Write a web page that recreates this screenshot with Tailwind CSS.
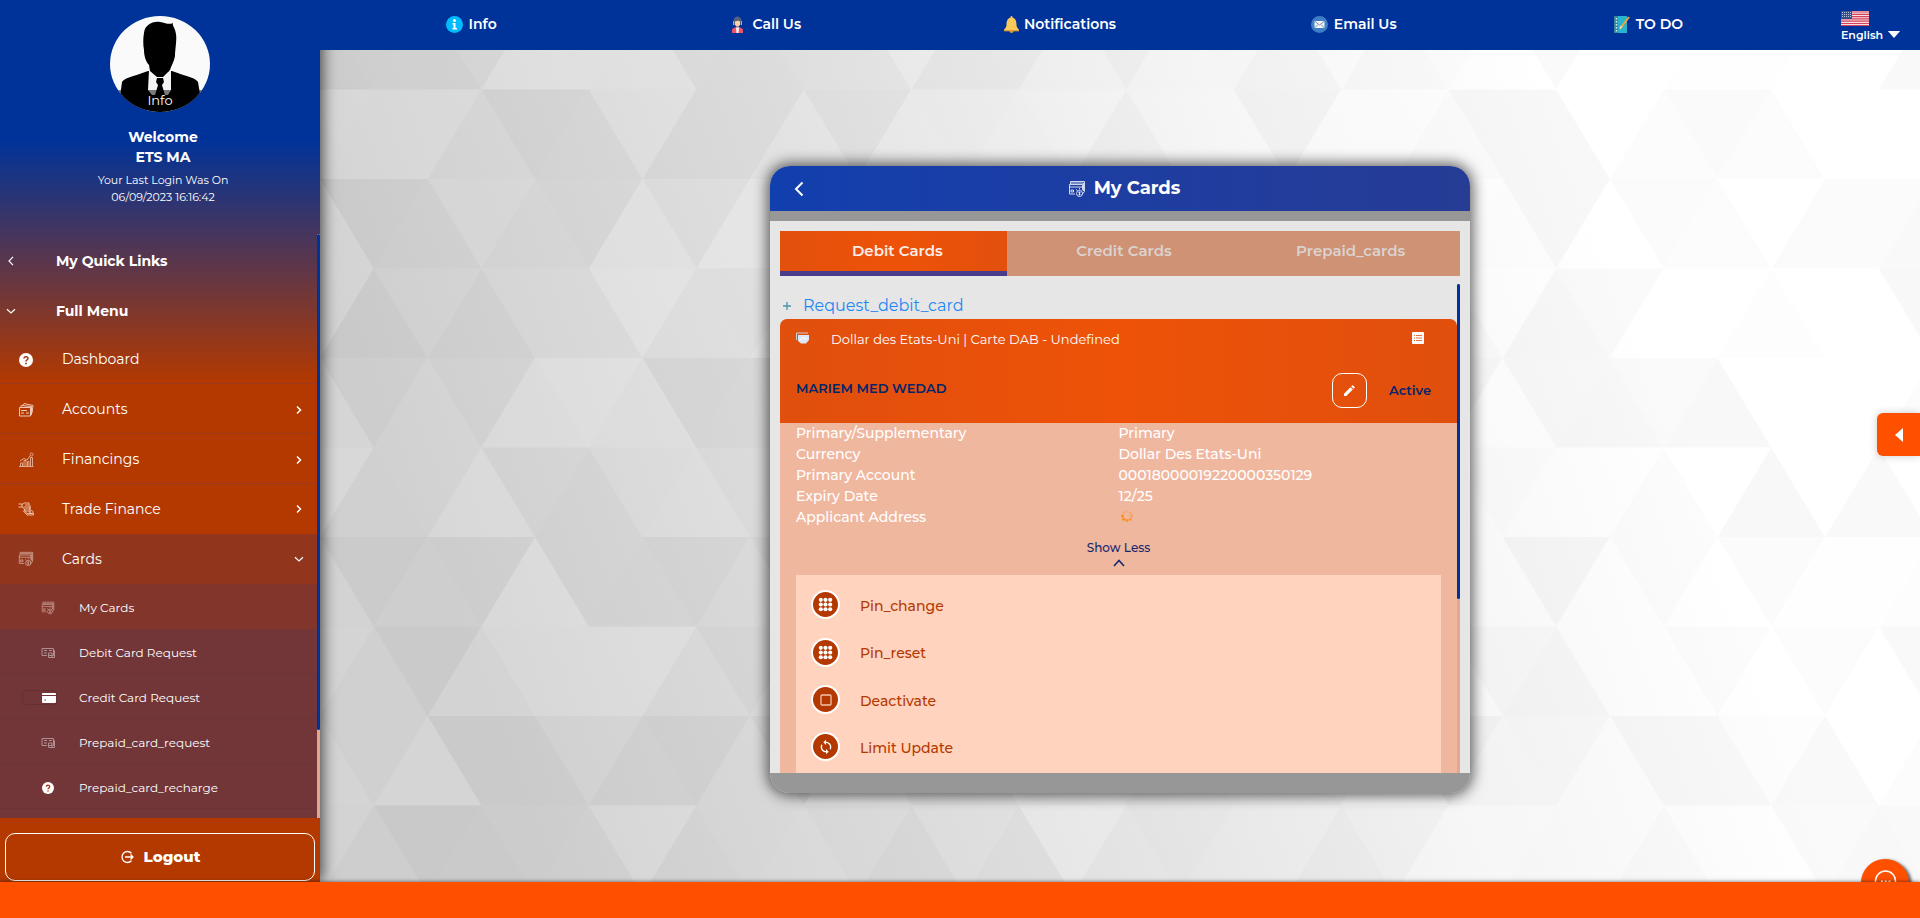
<!DOCTYPE html>
<html lang="en">
<head>
<meta charset="utf-8">
<meta name="viewport" content="width=device-width, initial-scale=1">
<title>My Cards</title>
<script src="https://cdn.jsdelivr.net/npm/@tailwindcss/browser@4"></script>
</head>
<body class="flex h-screen flex-col overflow-hidden bg-white font-['Montserrat','Inter',sans-serif] text-white">

<!-- Shared icons -->
<svg class="hidden" aria-hidden="true">
  <symbol id="i-right" viewBox="0 0 10 10"><path d="M3 1.500L6.500 5L3 8.500" fill="none" stroke="currentColor" stroke-width="1.500"/></symbol>
  <symbol id="i-left" viewBox="0 0 10 10"><path d="M7 .8L3 5L7 9.200" fill="none" stroke="currentColor" stroke-width="1.200"/></symbol>
  <symbol id="i-down" viewBox="0 0 10 10"><path d="M1 3.200L5 7L9 3.200" fill="none" stroke="currentColor" stroke-width="1.200"/></symbol>
  <symbol id="i-help" viewBox="0 0 14 14"><circle cx="7" cy="7" r="7" fill="currentColor"/><path d="M5 5.600C5 3.200 9 3.200 9 5.500C9 7 7 6.900 7 8.400" fill="none" stroke="#a33a14" stroke-width="1.500"/><circle cx="7" cy="10.500" r=".9" fill="#a33a14"/></symbol>
  <symbol id="i-cards" viewBox="0 0 18 18"><g fill="none" stroke="currentColor" stroke-width=".8"><path d="M2.500 4V1.500H16.500V11.500L14 14.500"/><path d="M1.500 14V4.500H14.500V9M3 3H15.500V11"/><path d="M1.500 7H14.500M1.500 14H7M3 10H5.500V12H3Z"/><circle cx="11.500" cy="13.500" r="3"/><path d="M11.500 11.500V15.500M10.500 12.500H12.500M10.500 14.500H12.500M8 9.500L9.500 10.500M11.500 8V9.500M15 9L14 10.500"/></g></symbol>
  <symbol id="i-cardreq" viewBox="0 0 14 12"><g fill="none" stroke="currentColor"><path d="M1 1.500H12.500V8.500H8M1 1.500V8.500H6"/><path d="M3 3.500H6M8 3.500H11M3 6H6M7.500 6H11V10.500H7.500ZM12.500 3.500H13.500V10.500H11"/></g></symbol>
  <symbol id="i-keypad" viewBox="0 0 16 16"><g fill="currentColor"><circle cx="3" cy="3" r="2.200"/><circle cx="8" cy="3" r="2.200"/><circle cx="13" cy="3" r="2.200"/><circle cx="3" cy="8" r="2.200"/><circle cx="8" cy="8" r="2.200"/><circle cx="13" cy="8" r="2.200"/><circle cx="3" cy="13" r="2.200"/><circle cx="8" cy="13" r="2.200"/><circle cx="13" cy="13" r="2.200"/></g></symbol>
</svg>

<div class="flex min-h-0 flex-1">

  <aside class="relative z-10 flex w-80 shrink-0 flex-col bg-[linear-gradient(#003399_140px,#b33900_383px)] shadow-[2px_0_14px_rgba(0,0,0,0.7)]">
    <div class="flex h-[234px] shrink-0 flex-col items-center pt-4">
      <svg class="h-24 w-[100px]" viewBox="0 0 100 96" role="img" aria-label="Profile picture">
        <defs><clipPath id="av"><ellipse cx="50" cy="48" rx="50" ry="48"/></clipPath></defs>
        <g clip-path="url(#av)">
          <rect width="100" height="96" fill="#fafafa"/>
          <path d="M8 96L12 66C14 62 22 61 38 55L62 55C78 61 86 62 88 66L93 96Z" fill="#000"/>
          <path d="M39 54L38 74L42 79H58L61 74L61 54L50 60Z" fill="#f4f4f4"/>
          <path d="M47 62H53L54 66L52 69L55 79H45L48 69L46 66Z" fill="#000"/>
          <path d="M34 17C35 9 42 5 50 6C56 7 59 9 63 7C62 10 65 11 66 18C67 24 65 34 65 40C64 46 61 50 60 54L53 61H47L40 55L39 49C36 46 34 40 34 34C33 29 33 22 34 17Z" fill="#000"/>
          <rect y="74" width="100" height="20" fill="#000" fill-opacity=".5"/>
        </g>
        <text x="50" y="89" fill="#fff" font-size="13" text-anchor="middle">Info</text>
      </svg>
      <p class="mt-[15px] pl-1.5 text-center text-[14px] leading-5 font-bold">Welcome<br>ETS MA</p>
      <p class="mt-[5px] pl-1.5 text-center text-[11px] leading-[17px]">Your Last Login Was On<br>06/09/2023 16:16:42</p>
    </div>

    <nav class="relative min-h-0 flex-1 overflow-hidden" aria-label="Main menu">
      <a href="#" class="flex h-[50px] items-center pt-1 pl-1.5 text-[14px] font-bold"><svg class="mr-10 size-2.5"><use href="#i-left"/></svg>My Quick Links</a>
      <a href="#" class="flex h-[50px] items-center pt-1 pl-1.5 text-[14px] font-bold"><svg class="mr-10 size-2.5"><use href="#i-down"/></svg>Full Menu</a>
      <a href="#" class="flex h-[50px] items-center border-b border-[#9b3a1c] pt-0.5 pr-4 pl-[18px] text-[14px]"><svg class="mr-7 size-4 p-px"><use href="#i-help"/></svg>Dashboard</a>
      <a href="#" class="flex h-[50px] items-center border-b border-[#9b3a1c] pt-0.5 pr-4 pl-[18px] text-[14px]">
        <svg class="mr-7 size-4 text-[#f0c9b8]" viewBox="0 0 16 16" fill="none" stroke="currentColor"><path d="M1.500 5.500H12.500V14H1.500ZM3 5V3.500L13.500 4.500V13M5 3L6 1.500L15 3.500L14 11M3 8.500H9M3 11H6M8 11H11"/></svg>
        <span class="flex-1">Accounts</span><svg class="size-2.5"><use href="#i-right"/></svg></a>
      <a href="#" class="flex h-[50px] items-center border-b border-[#9b3a1c] pt-0.5 pr-4 pl-[18px] text-[14px]">
        <svg class="mr-7 size-4 text-[#e0a78e]" viewBox="0 0 16 16" fill="none" stroke="currentColor"><path d="M1 14.500H15.500M2.500 14V11H4.500V14M6 14V8.500H8V14M9.500 14V9.500H11V14M12.500 14V5.500H14.500V14M2 9L6 6.500L9 8L12 4"/><circle cx="13.500" cy="2.500" r="1.500"/></svg>
        <span class="flex-1">Financings</span><svg class="size-2.5"><use href="#i-right"/></svg></a>
      <a href="#" class="flex h-[50px] items-center pr-4 pl-[18px] text-[14px]">
        <svg class="mr-7 size-4 text-[#f0c9b8]" viewBox="0 0 16 16" fill="none" stroke="currentColor" stroke-width=".9"><path d="M.5 3H4V6H.500M4 3.500L6 2H11V4H7M5.500 6H12V8H6.500L4 6M6.500 8V10H12M7 10L9 12.500H15.500V14H9L5 9.500M12 4V12M13.500 9.500A1.500 1.500 0 1 1 13.400 9.500"/></svg>
        <span class="flex-1">Trade Finance</span><svg class="size-2.5"><use href="#i-right"/></svg></a>
      <a href="#" class="flex h-[50px] items-center bg-[#91361c] pr-4 pl-[18px] text-[14px]"><svg class="mr-7 size-4 text-[#dcb3a5]"><use href="#i-cards"/></svg><span class="flex-1">Cards</span><svg class="size-2.5"><use href="#i-down"/></svg></a>
      <a href="#" class="flex h-[45px] items-center bg-[#82352a] pt-0.5 pl-[22px] text-[12px]"><span class="mr-[22px] flex w-[35px] justify-end pr-0.5"><svg class="size-3.5 text-[#d2aaa2]"><use href="#i-cards"/></svg></span>My Cards</a>
      <a href="#" class="flex h-[45px] items-center border-b border-[#6b333a] bg-[#723639] pt-[3px] pl-[22px] text-[12px]"><span class="mr-[22px] flex w-[35px] justify-end pr-0.5"><svg class="h-3 w-3.5 text-[#b08d8e]"><use href="#i-cardreq"/></svg></span>Debit Card Request</a>
      <a href="#" class="flex h-[45px] items-center border-b border-[#6b333a] bg-[#723639] pt-[3px] pl-[22px] text-[12px]"><span class="mr-[22px] flex h-[15px] w-[35px] items-center justify-end rounded border border-[#653033]"><svg class="h-2.5 w-3.5" viewBox="0 0 14 10"><rect width="14" height="10" rx="1" fill="#fff"/><path d="M0 2.500H14M2.500 7H4" stroke="#723639"/></svg></span>Credit Card Request</a>
      <a href="#" class="flex h-[45px] items-center border-b border-[#6b333a] bg-[#723639] pt-[3px] pl-[22px] text-[12px]"><span class="mr-[22px] flex w-[35px] justify-end pr-0.5"><svg class="h-3 w-3.5 text-[#b08d8e]"><use href="#i-cardreq"/></svg></span>Prepaid_card_request</a>
      <a href="#" class="flex h-[45px] items-center border-b border-[#6b333a] bg-[#723639] pt-[3px] pl-[22px] text-[12px]"><span class="mr-[22px] flex w-[35px] justify-end pr-[3px]"><svg class="size-3"><use href="#i-help"/></svg></span>Prepaid_card_recharge</a>
      <div class="h-[45px] bg-[#723639]"></div>
      <div class="absolute inset-y-0 right-0 w-[3px] bg-[#dfa78f]"><div class="h-[85%] rounded-sm bg-[#003399]"></div></div>
    </nav>

    <div class="h-16 shrink-0 bg-[#b33900] px-[5px] pt-[15px]">
      <button type="button" class="flex h-12 w-full items-center justify-center gap-2.5 rounded-[10px] border border-white text-[15px] font-extrabold">
        <svg class="size-3.5" viewBox="0 0 14 14" fill="none" stroke="currentColor" stroke-width="1.300"><path d="M11.500 3.200A5.500 5.500 0 1 0 11.500 10.800M5 7H13M10.500 4.500L13 7L10.500 9.500"/></svg>Logout</button>
    </div>
  </aside>

  <div class="flex min-w-0 flex-1 flex-col">
    <header class="relative z-20 flex h-[50px] shrink-0 items-center bg-[#003399] pb-0.5">
      <nav class="grid flex-1 grid-cols-5 pl-1 text-[14px] font-semibold" aria-label="Quick actions">
        <a href="#" class="flex items-center justify-center gap-1.5"><svg class="size-[17px]" viewBox="0 0 17 17"><circle cx="8.500" cy="8.500" r="8.500" fill="#0bf"/><circle cx="8.500" cy="4.500" r="1.500" fill="#fff"/><path d="M6.500 7H9.500V12H11V13.500H6.500V12H7.500V8.500H6.500Z" fill="#fff"/></svg>Info</a>
        <a href="#" class="flex items-center justify-center gap-1.5"><svg class="size-[17px]" viewBox="0 0 17 17"><path d="M4.500 5C5 -1 12 -1 12.500 5V9H4.500Z" fill="#56627c"/><path d="M6 5.500C8 5.500 9 4 11 5.500V8.500C10 11.500 7 11.500 6 8.500Z" fill="#fbd2a8"/><path d="M3 17V14C3 12 6 12 7 11H10C11 12 14 12 14 14V17Z" fill="#ee5367"/><path d="M7 11.500H10L9.500 17H7.500Z" fill="#fff"/><path d="M4.500 5V9M12.500 5V9" stroke="#8fb5e0"/></svg>Call Us</a>
        <a href="#" class="flex items-center justify-center gap-1"><svg class="size-[17px]" viewBox="0 0 17 17"><circle cx="8.500" cy="15" r="2" fill="#e0972b"/><path d="M8.500 0C9.500 0 9.500 1 9.500 1.500C13 2.500 13.500 6 13.500 9C13.500 12 16 12.500 16 14.500H1C1 12.500 3.500 12 3.500 9C3.500 6 4 2.500 7.500 1.500C7.500 1 7.500 0 8.500 0Z" fill="#fbc85c"/><path d="M1 14H16V15.300H1Z" fill="#e0a13a"/></svg>Notifications</a>
        <a href="#" class="flex items-center justify-center gap-1.5"><svg class="size-[17px]" viewBox="0 0 17 17"><circle cx="8.500" cy="8.500" r="8.500" fill="#3f7ec4"/><path d="M3.500 5H13.500V12H3.500Z" fill="#f5f7fa"/><path d="M3.500 5L8.500 9L13.500 5M3.500 12L7 8.500M13.500 12L10 8.500" fill="none" stroke="#6e8db0"/></svg>Email Us</a>
        <a href="#" class="flex items-center justify-center gap-1.5"><svg class="size-[17px]" viewBox="0 0 17 17"><path d="M1 0H14V17H1Z" fill="#28b4cd"/><path d="M1 0H5V17H1Z" fill="#36839f"/><path d="M3.500 2V16" stroke="#e4eef2" stroke-width="1.500" stroke-dasharray="1.500 1.500"/><path d="M16 1L8 11.500" stroke="#f9a23b" stroke-width="2"/><path d="M8.500 10L7 13" stroke="#fbe3b5" stroke-width="1.500"/></svg>TO DO</a>
      </nav>
      <div class="w-[125px] shrink-0">
        <button type="button" class="ml-[46px] block pt-1 text-left text-[11px] leading-[14px] font-semibold">
          <svg class="mb-0.5 h-[15px] w-7" viewBox="0 0 28 15"><rect width="28" height="15" fill="#f7dfe3"/><path d="M0 1H28M0 3.300H28M0 5.600H28M0 7.900H28M0 10.200H28M0 12.500H28M0 14.600H28" stroke="#d4415a" stroke-width="1.200"/><rect width="11" height="8" fill="#36508c"/><path d="M1 1.500H10M1 3.500H10M1 5.500H10" stroke="#b7c2da" stroke-dasharray="1 1"/></svg>
          <span class="flex items-center gap-1">English<svg class="h-[7px] w-3.5" viewBox="0 0 14 8"><path d="M0 0H14L7 8Z" fill="#fff"/></svg></span>
        </button>
      </div>
    </header>

    <main class="relative flex min-h-0 flex-1 items-center justify-center overflow-hidden bg-[linear-gradient(70deg,#cfcfcf_12%,#e2e2e2_38%,#f5f5f5_62%,#ffffff_80%)] pt-[27px]">
      <!-- Triangle mosaic backdrop -->
      <svg id="mosaic" class="absolute inset-0 h-full w-full" aria-hidden="true"></svg>

      <section class="relative w-full max-w-[700px] overflow-hidden rounded-[20px] bg-[#e6e6e6] shadow-[0_0_14px_3px_rgba(0,0,0,0.6)]">
        <div class="flex h-[45px] items-center bg-linear-to-r from-[#113fae] to-[#263c95] px-5">
          <button type="button" aria-label="Back" class="flex size-[18px] items-center justify-center"><svg class="h-4 w-2.5" viewBox="0 0 10 16"><path d="M8.500 1.500L2 8L8.500 14.500" fill="none" stroke="#fff" stroke-width="2"/></svg></button>
          <h1 class="flex flex-1 items-center justify-center gap-2 pr-2.5 text-[18px] font-bold"><svg class="size-[18px]"><use href="#i-cards"/></svg>My Cards</h1>
        </div>
        <div class="h-2.5 bg-[#979797]"></div>

        <div class="px-2.5 pt-2.5">
          <div role="tablist" class="grid h-[45px] grid-cols-3 bg-[#cf9274] text-[15px] font-semibold text-[#dad3d0]">
            <button type="button" role="tab" aria-selected="true" class="border-b-[5px] border-[#483d8b] bg-linear-to-r from-[#e2500d] via-[#ee5208] to-[#e2500d] pl-2 text-[#fbeee8]">Debit Cards</button>
            <button type="button" role="tab" aria-selected="false" class="pb-[5px] pl-2">Credit Cards</button>
            <button type="button" role="tab" aria-selected="false" class="pb-[5px] pl-2">Prepaid_cards</button>
          </div>

          <div class="relative mt-2 h-[489px] overflow-hidden pr-[3px]">
            <a href="#" class="flex h-[35px] items-center gap-3 pt-[9px] pl-[3px] text-[16px] text-[#1e88f5]"><svg class="size-2" viewBox="0 0 8 8"><path d="M4 0V8M0 4H8" stroke="#4d93a8" stroke-width="1.300"/></svg>Request_debit_card</a>

            <div class="h-[104px] rounded-t-[7px] bg-linear-to-r from-[#e04f0d] via-[#ee5208] to-[#e04f0d] px-4">
              <div class="flex h-[38px] items-center text-[13px]">
                <svg class="mr-[22px] h-3 w-[13px]" viewBox="0 0 13 12"><path d="M.5 8V1H12" fill="none" stroke="#c9cfd6"/><path d="M2 3H13V8L10 11.500H5L2 9Z" fill="#dfe8f5"/><path d="M4 8L7 5.500L9 7L11 6" fill="none" stroke="#fff"/></svg>
                <span class="flex-1 pt-[3px]">Dollar des Etats-Uni | Carte DAB - Undefined</span>
                <button type="button" aria-label="Details" class="mr-[17px]"><svg class="size-3" viewBox="0 0 12 12"><rect width="12" height="12" rx="1" fill="#fff"/><path d="M2 3.500H10M2 6H10M2 8.500H10" stroke="#e8703a"/><path d="M3.500 2V10" stroke="#fff"/></svg></button>
              </div>
              <div class="flex h-[66px] items-center text-[13px] font-semibold text-[#03256c]">
                <span class="flex-1 pb-0.5">MARIEM MED WEDAD</span>
                <button type="button" aria-label="Edit" class="mr-[22px] flex size-[35px] items-center justify-center rounded-[10px] border border-white"><svg class="size-[11px]" viewBox="0 0 11 11" fill="#fff"><path d="M0 11V8.700L6.500 2.200L8.800 4.500L2.300 11ZM7.200 1.500L8.300 .4Q8.700 0 9.100 .4L10.600 1.900Q11 2.300 10.600 2.700L9.500 3.800Z"/></svg></button>
                <span class="mr-[10px] pt-0.5">Active</span>
              </div>
            </div>

            <div class="bg-[#f0b79f] px-4">
              <dl class="grid grid-cols-2 text-[14px] leading-[21px] font-medium">
                <dt>Primary/Supplementary</dt><dd>Primary</dd>
                <dt>Currency</dt><dd>Dollar Des Etats-Uni</dd>
                <dt>Primary Account</dt><dd>00018000019220000350129</dd>
                <dt>Expiry Date</dt><dd>12/25</dd>
                <dt>Applicant Address</dt>
                <dd class="pt-[3px] pl-0.5"><svg class="size-3" viewBox="0 0 12 12" fill="#f98f1e" role="img" aria-label="Loading"><circle cx="6" cy="1.500" r="1.300" opacity=".25"/><circle cx="9.200" cy="2.800" r="1.300" opacity=".4"/><circle cx="10.500" cy="6" r="1.400" opacity=".6"/><circle cx="9.200" cy="9.200" r="1.500" opacity=".75"/><circle cx="6" cy="10.500" r="1.500" opacity=".9"/><circle cx="2.800" cy="9.200" r="1.600"/><circle cx="1.600" cy="6" r="1.500"/><circle cx="2.800" cy="2.800" r="1.200" opacity=".3"/></svg></dd>
              </dl>
              <button type="button" class="mx-auto mt-3 flex h-[35px] flex-col items-center text-[12px] leading-4 font-medium text-[#14286e]">Show Less<svg class="mt-[3px] h-2 w-3" viewBox="0 0 12 8"><path d="M1 7L6 1.500L11 7" fill="none" stroke="#14286e" stroke-width="1.600"/></svg></button>

              <ul class="bg-[#ffd3be] px-[15px] pt-1.5 text-[14px] font-medium text-[#b33900]">
                <li><button type="button" class="flex h-[47px] items-center gap-5"><span class="flex size-[29px] items-center justify-center rounded-full border-2 border-white bg-[#b33900] text-white"><svg class="size-[15px]"><use href="#i-keypad"/></svg></span><span class="pt-[3px]">Pin_change</span></button></li>
                <li><button type="button" class="flex h-12 items-center gap-5"><span class="flex size-[29px] items-center justify-center rounded-full border-2 border-white bg-[#b33900] text-white"><svg class="size-[15px]"><use href="#i-keypad"/></svg></span><span class="pt-[3px]">Pin_reset</span></button></li>
                <li><button type="button" class="flex h-[47px] items-center gap-5"><span class="flex size-[29px] items-center justify-center rounded-full border-2 border-white bg-[#b33900] text-white"><svg class="size-3" viewBox="0 0 12 12"><rect x="1" y="1" width="10" height="10" rx="1" fill="none" stroke="#f3c4ae" stroke-width="1.300"/></svg></span><span class="pt-[3px]">Deactivate</span></button></li>
                <li><button type="button" class="flex h-[47px] items-center gap-5"><span class="flex size-[29px] items-center justify-center rounded-full border-2 border-white bg-[#b33900] text-white"><svg class="size-4" viewBox="0 0 24 24" fill="#fff"><path d="M12 4V1L8 5l4 4V6c3.300 0 6 2.700 6 6 0 1-.25 2-.7 2.800l1.460 1.460C19.540 15 20 13.570 20 12c0-4.420-3.580-8-8-8zm0 14c-3.310 0-6-2.690-6-6 0-1 .25-2 .7-2.800L5.240 7.740C4.460 9 4 10.430 4 12c0 4.420 3.580 8 8 8v3l4-4-4-4v3z"/></svg></span><span class="pt-[3px]">Limit Update</span></button></li>
                <li class="h-12"></li>
              </ul>
            </div>
            <div class="absolute inset-y-0 right-0 w-[3px] bg-[#e3a88f]"><div class="h-[315px] rounded-sm bg-[#003399]"></div></div>
          </div>
        </div>
        <div class="h-5 bg-[#979797]"></div>
      </section>

      <button type="button" aria-label="Open panel" class="absolute top-[363px] right-0 flex h-[43px] w-[43px] items-center justify-center rounded-l-md bg-[#ff5000] shadow-[0_0_8px_rgba(0,0,0,0.2)]"><svg class="h-3.5 w-2" viewBox="0 0 8 14"><path d="M8 0V14L0 7Z" fill="#fff"/></svg></button>
      <button type="button" aria-label="Chat" class="absolute right-[11px] -bottom-[25px] size-12 rounded-full bg-[#ff5000] shadow-[2px_2px_3px_1px_rgba(0,0,0,0.6)]"><svg class="size-full" viewBox="0 0 48 48" fill="none" stroke="#fff" stroke-width="1.500"><circle cx="24.500" cy="22" r="10"/><path d="M20 22.500H29.500" stroke-width="2" stroke-dasharray="1.800 2"/></svg></button>
    </main>
  </div>
</div>

<footer class="relative z-30 h-9 shrink-0 bg-[#ff5000] shadow-[0_0_4px_rgba(0,0,0,0.6)]"></footer>

<script>
  // Fill the backdrop with rows of alternating triangles in faint shades.
  (function () {
    var svg = document.getElementById('mosaic');
    var side = 107.5, h = 89.5, out = '', rows = 16, cols = 72;
    function shade(a, b) { var v = Math.sin(a * 127.1 + b * 311.7) * 43758.5453; return v - Math.floor(v); }
    for (var r = 0; r < rows; r++) {
      var y = r * h - 50, shift = r % 2 ? side / 2 : 0;
      for (var c = -3; c < cols; c++) {
        var x = c * side / 2 + shift, up = ((c % 2) + 2) % 2;
        var pts = up ? [x, y + h, x + side, y + h, x + side / 2, y] : [x, y, x + side, y, x + side / 2, y + h];
        var s = shade(r + 1, c + 3), dark = s < 0.55;
        var o = dark ? s * 0.055 : (s - 0.55) * 0.45;
        out += '<polygon points="' + pts.join(' ') + '" fill="' + (dark ? '#000' : '#fff') + '" fill-opacity="' + o.toFixed(3) + '"/>';
      }
    }
    svg.innerHTML = out;
  })();
</script>
</body>
</html>
